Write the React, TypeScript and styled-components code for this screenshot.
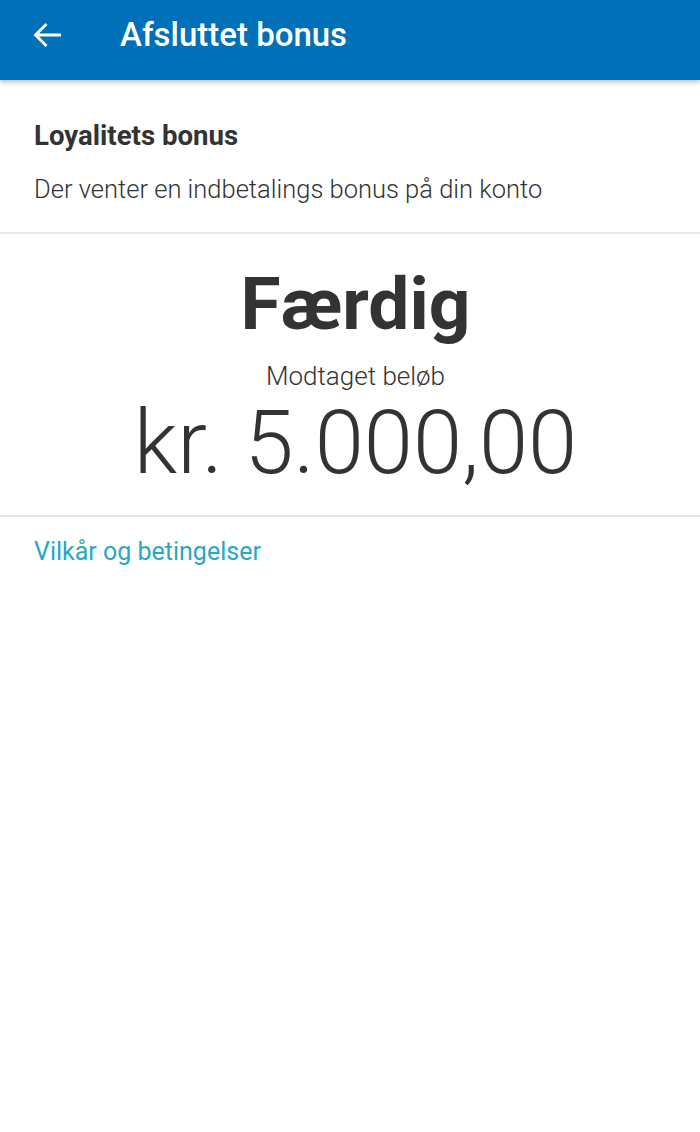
import styled, { createGlobalStyle } from "styled-components";

// #region styled
const GlobalStyle = createGlobalStyle`
  html, body {
    margin: 0;
    padding: 0;
    background: #ffffff;
  }

  body {
    font-family: Roboto, "Noto Sans", "Liberation Sans", sans-serif;
    color: #333333;
  }
`;

const Page = styled.div`
  width: 700px;
  min-height: 1132px;

  display: flex;
  flex-direction: column;

  background-color: #ffffff;
`;

const AppBar = styled.header`
  height: 80px;
  box-sizing: border-box;

  display: flex;
  flex-direction: row;
  align-items: center;

  padding: 0 0 10px 33px;

  background-color: #0070b9;
  box-shadow: 0 2px 5px rgba(0, 0, 0, 0.28);
`;

const BackButton = styled.button`
  width: 28px;
  height: 26px;

  display: flex;
  align-items: center;
  justify-content: center;

  padding: 0;
  margin-right: 59px;

  background: transparent;
  border: none;
`;

const Title = styled.h1`
  margin: 0;

  font-size: 33px;
  font-weight: 500;
  line-height: 40px;
  color: #ffffff;
`;

const Section = styled.section`
  padding: 40px 34px 28px;

  display: flex;
  flex-direction: column;
  gap: 22px;

  border-bottom: 2px solid #e8e8e8;
`;

const SectionTitle = styled.h2`
  margin: 0;

  font-size: 27.6px;
  font-weight: 700;
  line-height: 32px;
  color: #333333;
`;

const SectionText = styled.p`
  margin: 0;

  font-size: 25.5px;
  font-weight: 300;
  line-height: 30px;
  color: #333333;
`;

const Status = styled.div`
  padding: 27px 0 22px 11px;

  display: flex;
  flex-direction: column;
  align-items: center;

  border-bottom: 2px solid #e8e8e8;
`;

const StatusLabel = styled.div`
  font-size: 73px;
  font-weight: 700;
  line-height: 86px;
  color: #333333;
`;

const AmountLabel = styled.div`
  margin-top: 14px;

  font-size: 26px;
  font-weight: 300;
  line-height: 30px;
  color: #333333;
`;

const Amount = styled.div`
  margin-top: 2px;

  font-size: 88.5px;
  font-weight: 300;
  line-height: 100px;
  color: #333333;
`;

const TermsLink = styled.a`
  padding: 20px 34px;

  font-size: 25px;
  font-weight: 400;
  line-height: 30px;
  color: #2aa7c2;
  text-decoration: none;
`;
// #endregion styled

export default function App() {
  return (
    <>
      <GlobalStyle />
      <Page>
        <AppBar>
          <BackButton aria-label="Tilbage">
            <svg width="28" height="24" viewBox="0 0 28 24" fill="none">
              <path
                d="M27 12H3M12.5 2L2.5 12l10 10"
                stroke="#ffffff"
                strokeWidth="2.8"
                strokeLinecap="square"
              />
            </svg>
          </BackButton>
          <Title>Afsluttet bonus</Title>
        </AppBar>
        <Section>
          <SectionTitle>Loyalitets bonus</SectionTitle>
          <SectionText>Der venter en indbetalings bonus på din konto</SectionText>
        </Section>
        <Status>
          <StatusLabel>Færdig</StatusLabel>
          <AmountLabel>Modtaget beløb</AmountLabel>
          <Amount>kr. 5.000,00</Amount>
        </Status>
        <TermsLink href="#">Vilkår og betingelser</TermsLink>
      </Page>
    </>
  );
}
